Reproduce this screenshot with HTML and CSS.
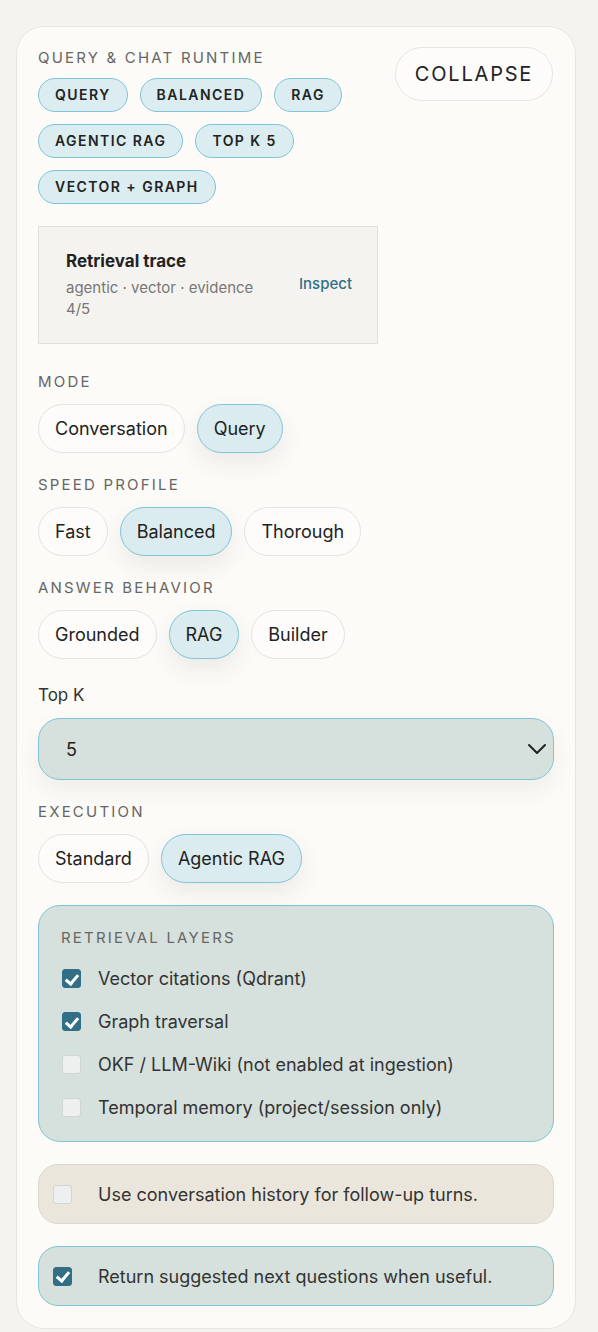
FILE: index.html
```html
<!doctype html>
<html lang="en">
<head>
  <meta charset="utf-8">
  <title>Query &amp; Chat Runtime</title>
  <meta name="viewport" content="width=device-width, initial-scale=1">
  <link rel="stylesheet" href="styles.css">
</head>
<body>
<div class="panel">
  <div class="panel-head">
    <div class="head-main">
      <div class="eyebrow">Query &amp; Chat Runtime</div>
      <div class="tags">
        <span class="tag">Query</span>
        <span class="tag">Balanced</span>
        <span class="tag">RAG</span>
        <span class="tag">Agentic RAG</span>
        <span class="tag">Top K 5</span>
        <span class="tag">Vector + Graph</span>
      </div>
      <div class="trace">
        <div class="trace-text">
          <div class="trace-title">Retrieval trace</div>
          <div class="trace-sub">agentic · vector · evidence 4/5</div>
        </div>
        <a href="#" class="trace-link">Inspect</a>
      </div>
    </div>
    <button class="collapse-btn">Collapse</button>
  </div>

  <div class="group">
    <div class="label">Mode</div>
    <div class="pills">
      <button class="pill">Conversation</button>
      <button class="pill active">Query</button>
    </div>
  </div>

  <div class="group">
    <div class="label">Speed profile</div>
    <div class="pills">
      <button class="pill">Fast</button>
      <button class="pill active">Balanced</button>
      <button class="pill">Thorough</button>
    </div>
  </div>

  <div class="group">
    <div class="label">Answer behavior</div>
    <div class="pills">
      <button class="pill">Grounded</button>
      <button class="pill active">RAG</button>
      <button class="pill">Builder</button>
    </div>
  </div>

  <div class="group field">
    <div class="field-label">Top K</div>
    <div class="select">
      <span>5</span>
      <svg width="20" height="12" viewBox="0 0 20 12"><path d="M2 2l8 8 8-8" fill="none" stroke="#222" stroke-width="2" stroke-linecap="round" stroke-linejoin="round"/></svg>
    </div>
  </div>

  <div class="group">
    <div class="label">Execution</div>
    <div class="pills">
      <button class="pill">Standard</button>
      <button class="pill active">Agentic RAG</button>
    </div>
  </div>

  <div class="layers">
    <div class="label">Retrieval layers</div>
    <div class="check-list">
      <div class="check-row"><span class="box on"></span>Vector citations (Qdrant)</div>
      <div class="check-row"><span class="box on"></span>Graph traversal</div>
      <div class="check-row"><span class="box"></span>OKF / LLM-Wiki (not enabled at ingestion)</div>
      <div class="check-row"><span class="box"></span>Temporal memory (project/session only)</div>
    </div>
  </div>

  <div class="toggle muted">
    <div class="check-row"><span class="box"></span>Use conversation history for follow-up turns.</div>
  </div>

  <div class="toggle">
    <div class="check-row"><span class="box on"></span>Return suggested next questions when useful.</div>
  </div>
</div>
</body>
</html>
```

FILE: styles.css
```css
*{
  margin:0;
  padding:0;
  box-sizing:border-box;
}
body{
  background:#f5f3ef;
  font-family: Inter, "Noto Sans", sans-serif;
  color:#222;
  padding:26px 22px 0 16px;
}
.panel{
  width:560px;
  background:#fcfbf8;
  border:1px solid #e9e6e0;
  border-radius:28px;
  padding:20px 21px 22px 21px;
}
.panel-head{
  display:flex;
  gap:17px;
  align-items:flex-start;
}
.head-main{
  width:340px;
}
.eyebrow,
.label{
  font-size:15px;
  letter-spacing:2.2px;
  text-transform:uppercase;
  color:#666;
  line-height:22px;
}
.tags{
  display:flex;
  flex-wrap:wrap;
  gap:12px 12px;
  margin-top:9px;
}
.tag{
  height:34px;
  line-height:32px;
  padding:0 16px;
  border:1px solid #80c4d7;
  background:#dbedf1;
  border-radius:17px;
  font-size:14px;
  font-weight:600;
  letter-spacing:1.45px;
  text-transform:uppercase;
  color:#222;
}
.trace{
  margin-top:22px;
  height:118px;
  background:#f5f3ef;
  border:1px solid #e3e0da;
  display:flex;
  align-items:center;
  justify-content:space-between;
  padding:0 27px 0 27px;
}
.trace-text{
  width:200px;
}
.trace-title{
  font-size:17px;
  font-weight:700;
  color:#222;
  margin-bottom:6px;
}
.trace-sub{
  font-size:15px;
  color:#777;
  line-height:21px;
}
.trace-link{
  font-size:15px;
  font-weight:500;
  color:#2f7088;
  text-decoration:none;
  margin-top:-4px;
  margin-right:-2px;
}
.collapse-btn{
  margin-top:0;
  width:158px;
  height:54px;
  border:1px solid #e8e5df;
  background:#fdfcfa;
  border-radius:27px;
  font-family:inherit;
  font-size:20px;
  letter-spacing:1.8px;
  text-transform:uppercase;
  color:#222;
}
.group{
  margin-top:27px;
}
.group + .group{
  margin-top:21px;
}
.pills{
  display:flex;
  gap:12px;
  margin-top:11px;
}
.pill{
  height:49px;
  padding:0 16px;
  border:1px solid #e6e3de;
  background:#fdfcfa;
  border-radius:25px;
  font-family:inherit;
  font-size:18px;
  color:#222;
}
.pill.active{
  background:#dbecf0;
  border-color:#7fc4d7;
  box-shadow:0 10px 24px rgba(60,60,50,0.09);
}
.group.field{
  margin-top:24px;
}
.field-label{
  font-size:17px;
  color:#333;
  line-height:24px;
}
.select{
  margin-top:11px;
  height:62px;
  border:1px solid #7fc4d7;
  background:#d6e0dc;
  border-radius:22px;
  display:flex;
  align-items:center;
  justify-content:space-between;
  padding:0 6px 0 27px;
  font-size:18px;
  color:#222;
  box-shadow:0 10px 24px rgba(60,60,50,0.07);
}
.layers{
  margin-top:22px;
  background:#d6e0dc;
  border:1px solid #7fc4d7;
  border-radius:22px;
  padding:21px 22px 12px 22px;
}
.check-list{
  margin-top:8px;
}
.check-row{
  display:flex;
  align-items:center;
  font-size:18px;
  color:#333;
  height:43px;
}
.box{
  width:19px;
  height:19px;
  border-radius:3px;
  border:1px solid #d2d5d3;
  background:#eef0ef;
  margin:0 17px 0 1px;
  flex:none;
  position:relative;
}
.box.on{
  background:#326f86;
  border-color:#326f86;
}
.box.on::after{
  content:"";
  position:absolute;
  left:5px;
  top:1.5px;
  width:5px;
  height:10px;
  border:solid #fff;
  border-width:0 3px 3px 0;
  transform:rotate(40deg);
}
.toggle{
  margin-top:22px;
  height:60px;
  background:#d6e0dc;
  border:1px solid #7fc4d7;
  border-radius:20px;
  display:flex;
  align-items:center;
  padding:0 13px;
}
.toggle .box{
  margin-right:26px;
}
.toggle.muted{
  background:#ebe6dc;
  border-color:#dcd7cd;
}
```
